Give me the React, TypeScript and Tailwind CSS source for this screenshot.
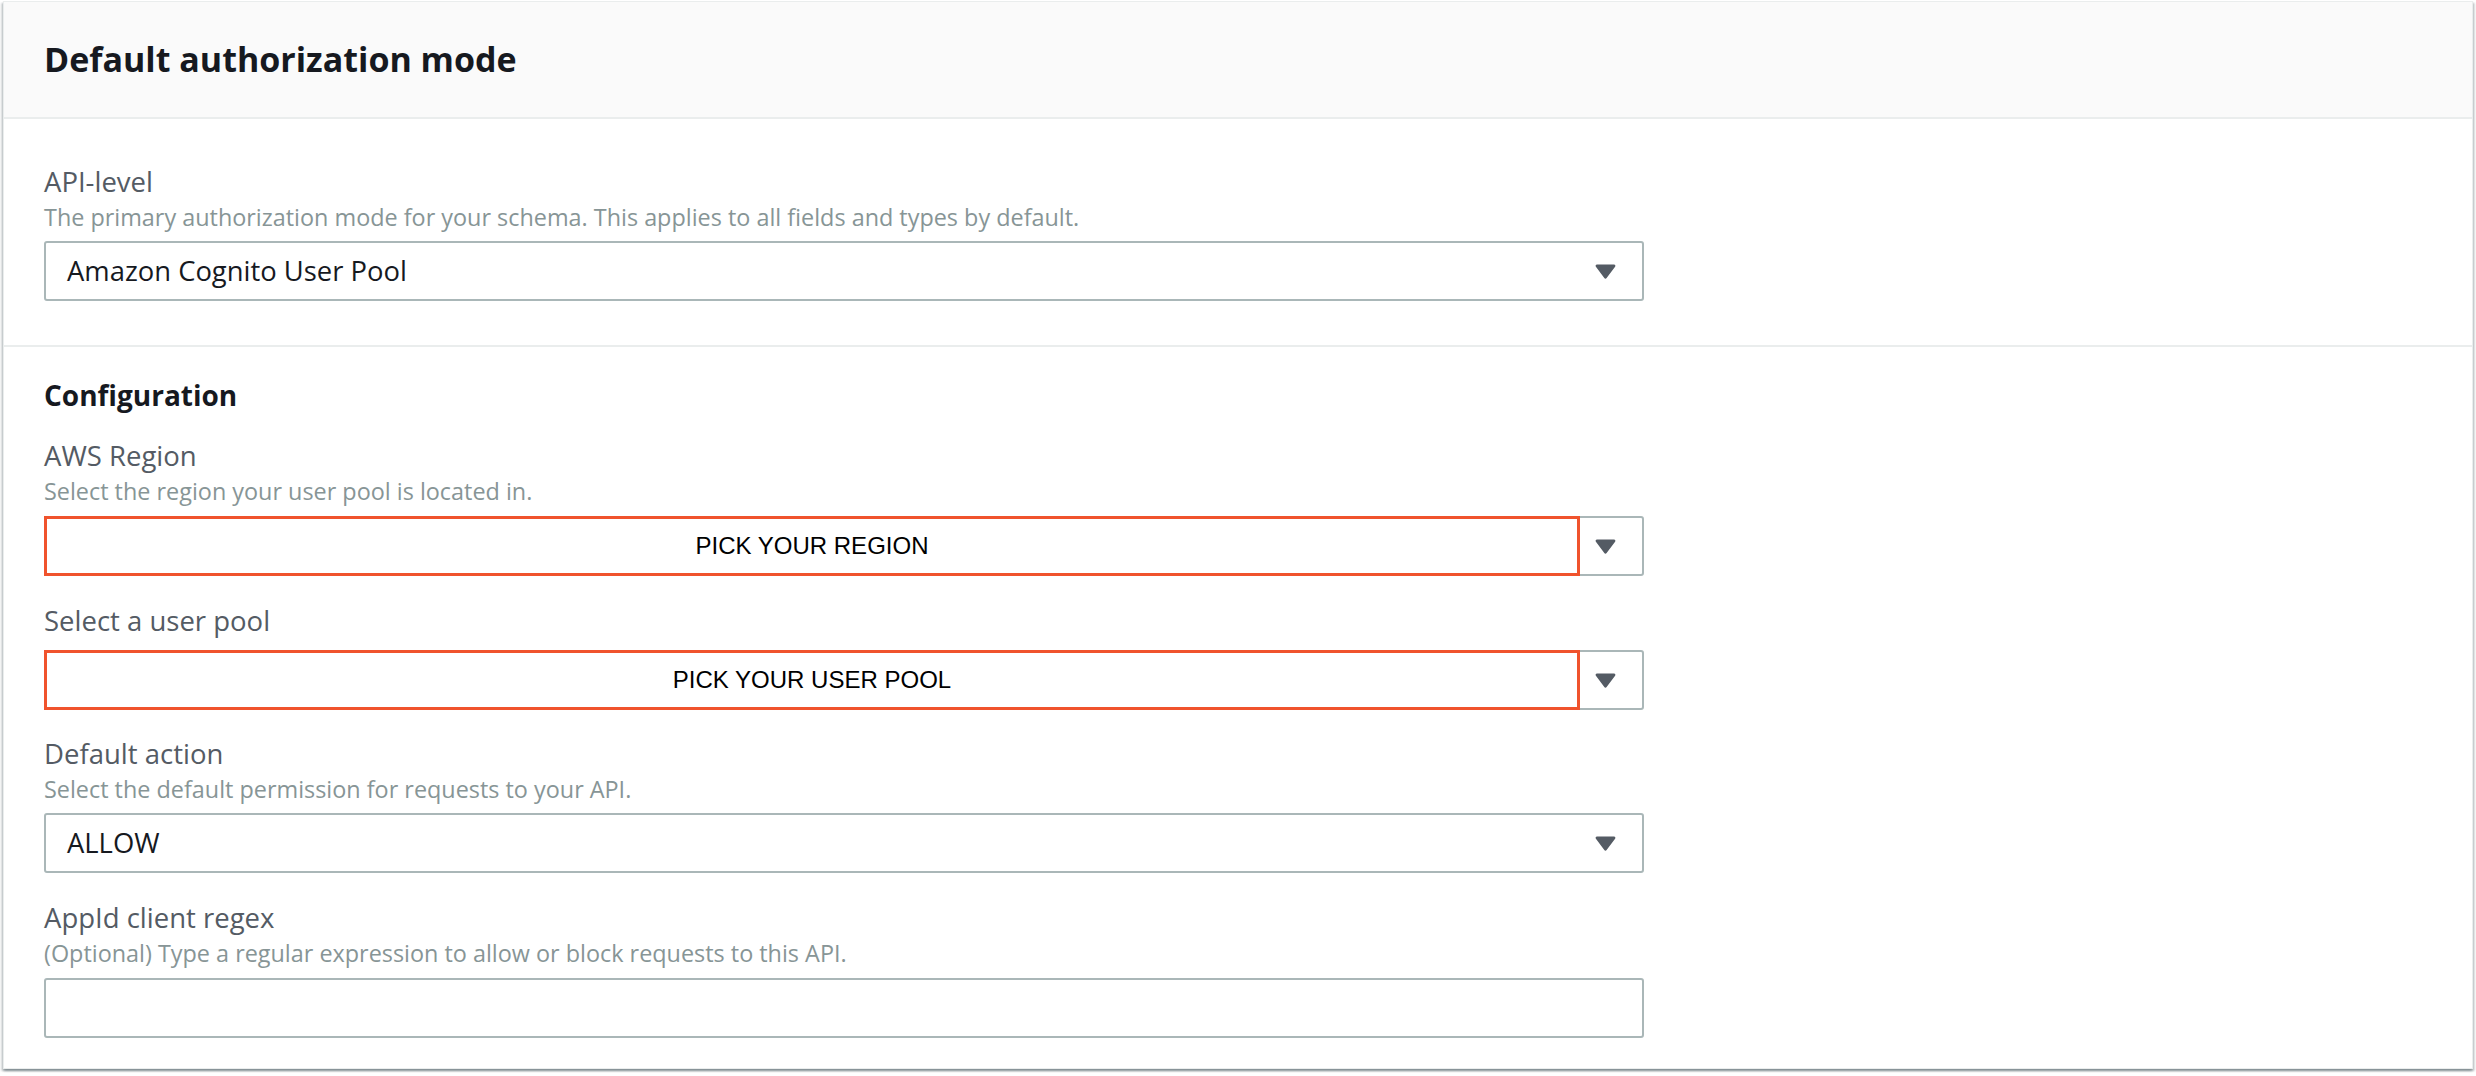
import React from "react";

const font = { fontFamily: '"Open Sans", "Noto Sans", sans-serif' };

const Caret = () => (
  <svg width="21" height="17" viewBox="0 0 21 17" className="shrink-0">
    <path d="M2 1.5h17c1.2 0 1.8 1.3 1.1 2.2l-8.5 11.4c-.6.8-1.7.8-2.3 0L.9 3.7C.2 2.8.8 1.5 2 1.5z" fill="#545b64" />
  </svg>
);

const Label = ({ children, className = "" }: { children: React.ReactNode; className?: string }) => (
  <div className={`text-[27.5px] leading-[34px] text-[#545b64] ${className}`}>{children}</div>
);

const Hint = ({ children }: { children: React.ReactNode }) => (
  <div className="mt-[3px] text-[23.4px] leading-[30px] text-[#879596]">{children}</div>
);

const Select = ({ value, className = "" }: { value: string; className?: string }) => (
  <div
    className={`flex h-[60px] w-[1600px] items-center justify-between rounded-[3px] border-2 border-[#aab7b8] bg-white pl-[21px] pr-[26px] ${className}`}
  >
    <span className="text-[27.4px] text-[#16191f]">{value}</span>
    <Caret />
  </div>
);

// select with the red callout drawn over it
const MarkedSelect = ({ note, className = "" }: { note: string; className?: string }) => (
  <div className={`relative w-[1600px] ${className}`}>
    <Select value="" />
    <div className="absolute left-0 top-0 flex h-[60px] w-[1536px] items-center justify-center border-[3px] border-[#f0532d] bg-white">
      <span className="text-[24px] text-black" style={{ fontFamily: '"Liberation Sans", Arial, sans-serif' }}>
        {note}
      </span>
    </div>
  </div>
);

export default function App() {
  return (
    <div className="min-h-screen bg-white px-[3px] pt-[1px] pb-[6px]" style={font}>
      <div className="border border-[#eaeded] bg-white shadow-[0_2px_2px_0_rgba(0,28,36,0.3),2px_2px_2px_0_rgba(0,28,36,0.15),-2px_2px_2px_0_rgba(0,28,36,0.15)]">
        {/* header */}
        <div className="flex h-[117px] items-center border-b-2 border-[#eaeded] bg-[#fafafa] px-[40px]">
          <h1 className="text-[34px] font-bold text-[#16191f]">Default authorization mode</h1>
        </div>

        {/* API-level */}
        <div className="border-b-2 border-[#eaeded] px-[40px] pt-[46px] pb-[44px]">
          <Label>API-level</Label>
          <Hint>The primary authorization mode for your schema. This applies to all fields and types by default.</Hint>
          <Select value="Amazon Cognito User Pool" className="mt-[9px]" />
        </div>

        {/* Configuration */}
        <div className="px-[40px] pt-[31px] pb-[30px]">
          <h2 className="text-[28px] leading-[34px] font-bold text-[#16191f]">Configuration</h2>

          <Label className="mt-[27px]">AWS Region</Label>
          <Hint>Select the region your user pool is located in.</Hint>
          <MarkedSelect note="PICK YOUR REGION" className="mt-[10px]" />

          <Label className="mt-[28px]">Select a user pool</Label>
          <MarkedSelect note="PICK YOUR USER POOL" className="mt-[12px]" />

          <Label className="mt-[27px]">Default action</Label>
          <Hint>Select the default permission for requests to your API.</Hint>
          <Select value="ALLOW" className="mt-[9px]" />

          <Label className="mt-[28px]">AppId client regex</Label>
          <Hint>(Optional) Type a regular expression to allow or block requests to this API.</Hint>
          <div className="mt-[10px] h-[60px] w-[1600px] rounded-[3px] border-2 border-[#aab7b8] bg-white" />
        </div>
      </div>
    </div>
  );
}
